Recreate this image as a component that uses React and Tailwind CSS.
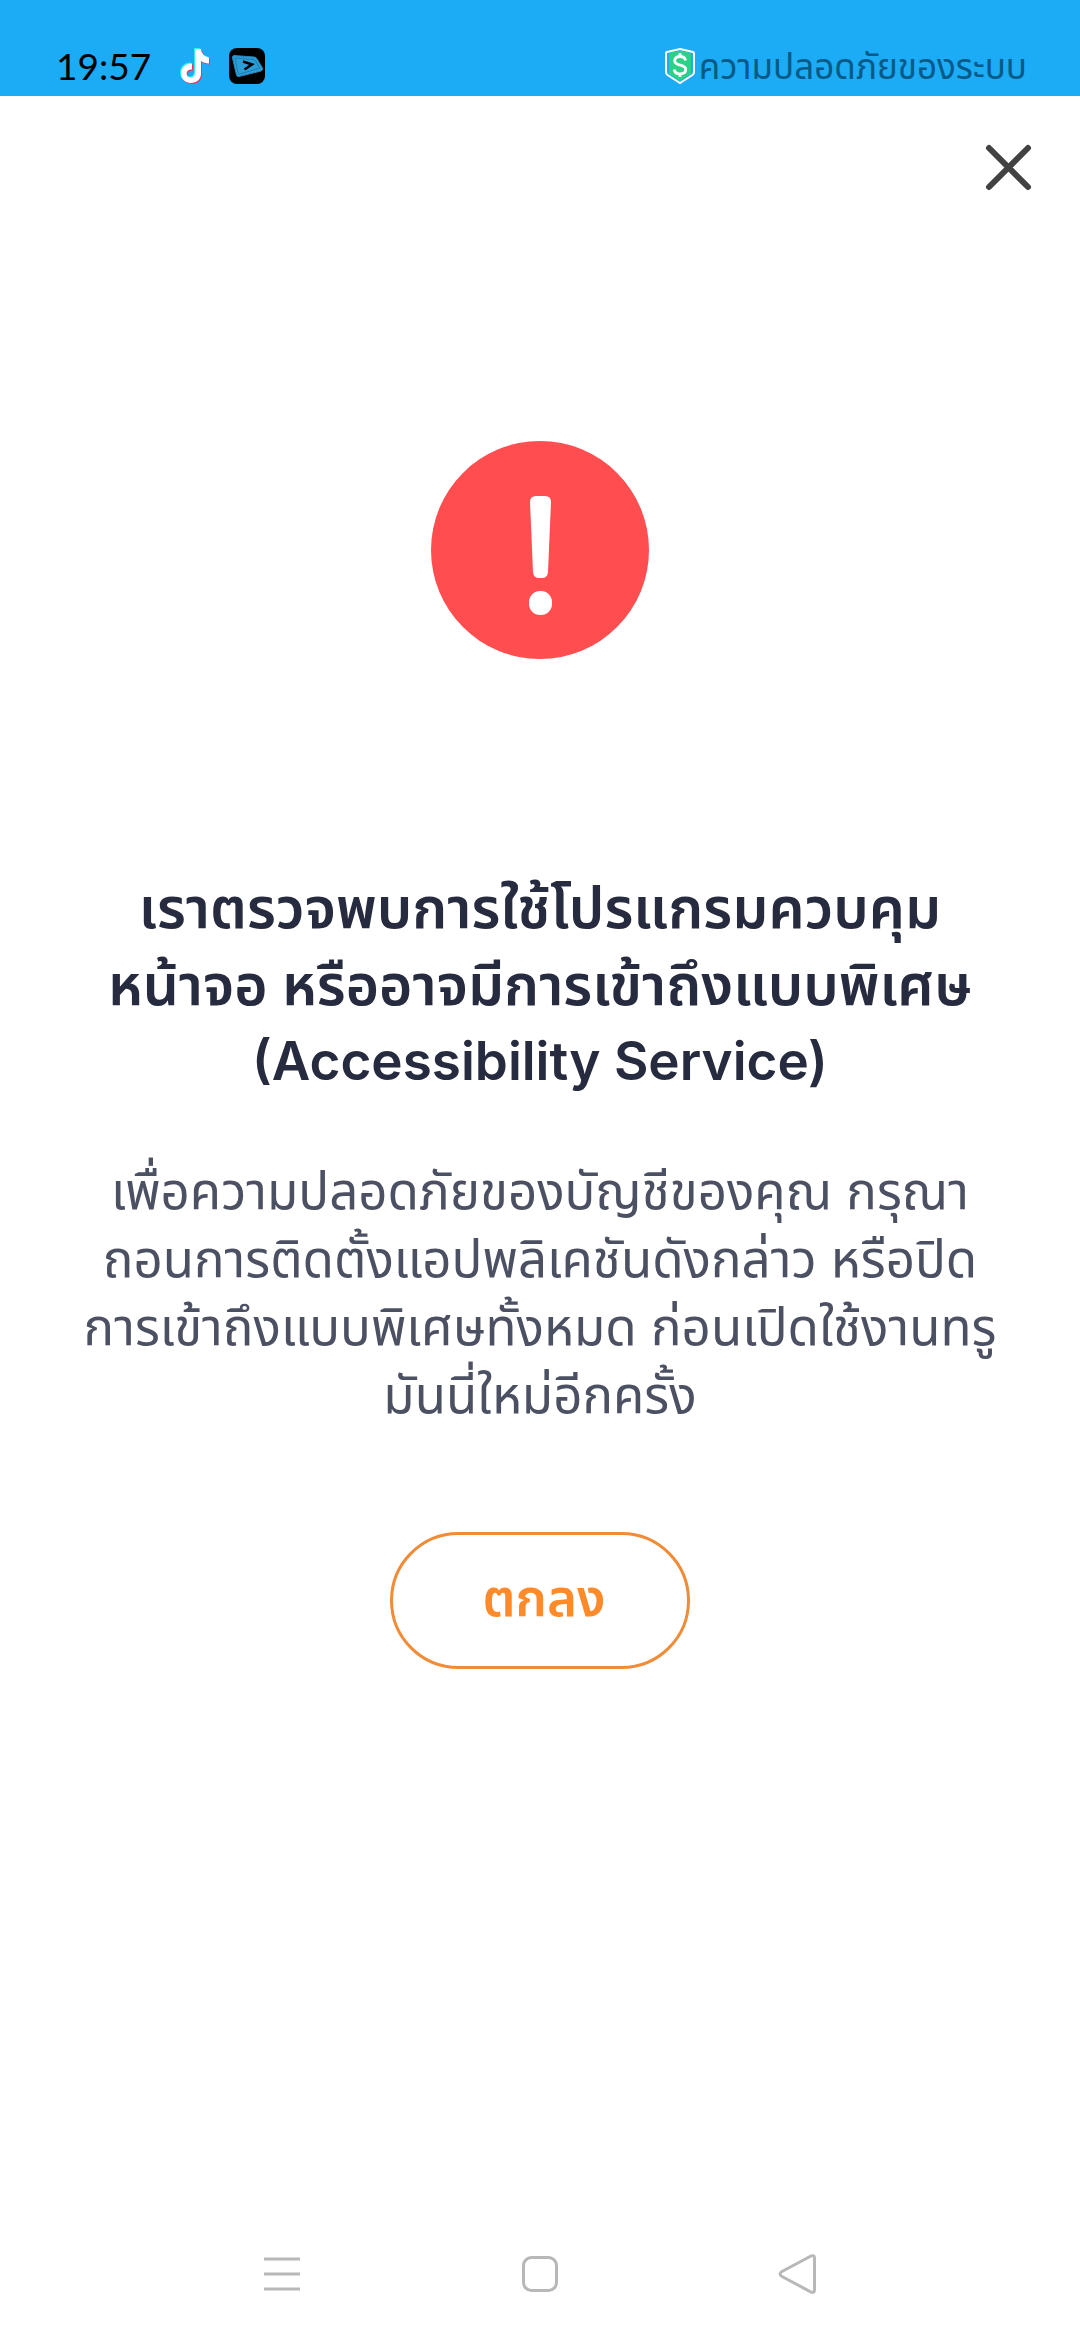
import React from "react";

const titleLines = [
  "เราตรวจพบการใช้โปรแกรมควบคุม",
  "หน้าจอ หรืออาจมีการเข้าถึงแบบพิเศษ",
];

const messageLines = [
  "เพื่อความปลอดภัยของบัญชีของคุณ กรุณา",
  "ถอนการติดตั้งแอปพลิเคชันดังกล่าว หรือปิด",
  "การเข้าถึงแบบพิเศษทั้งหมด ก่อนเปิดใช้งานทรู",
  "มันนี่ใหม่อีกครั้ง",
];

const NOTE_PATH =
  "M15 0h6c.4 4.600 3.600 8 8 8.500v6c-3 0-5.800-1-8-2.500v12.500C21 30.500 16.500 34 11 34S1 30 1 24.500 5.500 14 12 14.500v6c-3-.6-5.400 1.300-5.400 4 0 2.300 1.900 4.100 4.200 4.100 2.600 0 4.200-1.900 4.200-4.600z";

const TikTokIcon = () => (
  <svg className="w-[32px] h-[36px]" viewBox="0 0 32 36" aria-hidden="true">
    <path d={NOTE_PATH} fill="#25f4ee" />
    <path d={NOTE_PATH} fill="#f2335d" transform="translate(2 2)" />
    <path d={NOTE_PATH} fill="#ffffff" transform="translate(1 1)" />
  </svg>
);

const PlayAppIcon = () => (
  <svg className="size-9" viewBox="0 0 36 36" aria-hidden="true">
    <rect width="36" height="36" rx="8" fill="#000000" />
    <path
      d="M5 7.500 25 9q2 0 3 2l5.500 9q.8 2-1.500 3L10 28.500q-2 .3-2.500-1.500L3.500 10q-.4-2.300 1.500-2.500z"
      fill="#2b9ed8"
      stroke="#2586b8"
    />
    <path
      d="M6 10l18 1.500q1.500 0 2.500 1.500l4.500 7L11 26q-1.500.3-2-1z"
      fill="none"
      stroke="#1f7cb0"
      strokeWidth="1"
    />
    <path d="M14 13.500l9 3-7.500 5" fill="none" stroke="#000000" strokeWidth="2.500" />
  </svg>
);

const ShieldIcon = () => (
  <svg className="w-[30px] h-[36px]" viewBox="0 0 30 36" aria-hidden="true">
    <path
      d="M15 1 28 4q1 .3 1 1.500V24q0 2-1.500 3L15 35 2.500 27Q1 26 1 24V5.500Q1 4.300 2 4z"
      fill="#1cabf5"
      stroke="#ffffff"
      strokeWidth="2"
    />
    <path d="M15 2.500 26 5v21L15 33 4 26V5z" fill="#2bd187" />
    <path
      d="M20.500 12.500C20 9.800 18 8.500 15 8.500c-3.200 0-5.300 1.700-5.300 4.200 0 6 11 3 11 8.800 0 2.700-2.300 4.300-5.700 4.300-3.300 0-5.400-1.500-5.800-4.300M15 5v4M15 25.500V29"
      fill="none"
      stroke="#ffffff"
      strokeWidth="2.800"
    />
  </svg>
);

const StatusBar = () => (
  <header className="flex h-24 items-end justify-between bg-[#1cabf5] pl-14 pr-[53px] pb-3">
    <div className="flex items-center">
      <span className="font-['Lato',sans-serif] text-[37px] leading-9 text-black">
        19:57
      </span>
      <div className="ml-7 flex items-center gap-[18px]">
        <TikTokIcon />
        <PlayAppIcon />
      </div>
    </div>
    <div className="flex items-center gap-1">
      <ShieldIcon />
      <span className="whitespace-nowrap font-['Noto_Sans','Noto_Sans_Thai',sans-serif] text-[35px] leading-9 text-[#075a87]">
        ความปลอดภัยของระบบ
      </span>
    </div>
  </header>
);

const NavigationBar = () => (
  <nav className="flex h-[132px] items-center justify-center gap-[202px] text-[#b8b8b8]">
    <button type="button" aria-label="Recent apps" className="p-2">
      <svg className="size-10" viewBox="0 0 40 40" fill="none" stroke="currentColor" strokeWidth="3">
        <path d="M2 5h36M2 20h36M2 35h36" />
      </svg>
    </button>
    <button type="button" aria-label="Home" className="p-2">
      <svg className="size-10" viewBox="0 0 40 40" fill="none" stroke="currentColor" strokeWidth="3">
        <rect x="3.500" y="3.500" width="33" height="33" rx="8" />
      </svg>
    </button>
    <button type="button" aria-label="Back" className="p-2">
      <svg className="size-10" viewBox="0 0 40 40" fill="none" stroke="currentColor" strokeWidth="3">
        <path d="M33 2 4 17.500Q0 20 4 22.500L33 38q3.500 1.200 3.500-2V4q0-3.200-3.500-2z" />
      </svg>
    </button>
  </nav>
);

const App = () => {
  return (
    <div className="flex min-h-screen flex-col bg-white font-['Inter','Noto_Sans_Thai',sans-serif]">
      <StatusBar />

      {/* Close */}
      <div className="flex justify-end px-10 pt-10">
        <button type="button" aria-label="Close" className="p-1">
          <svg className="size-14" viewBox="0 0 56 56" fill="none" stroke="#424242" strokeWidth="6" strokeLinecap="round">
            <path d="M9 8 48 47M48 8 9 47" />
          </svg>
        </button>
      </div>

      {/* Warning */}
      <main className="flex flex-1 flex-col items-center px-16 text-center">
        <svg className="mt-[241px] size-[218px]" viewBox="0 0 218 218" aria-hidden="true">
          <circle cx="109" cy="109" r="109" fill="#ff4d50" />
          <path
            d="M105 55h9q6 0 6 6l-3 70q-.5 6-6 6h-3q-5.500 0-6-6l-3-70q0-6 6-6z"
            fill="#ffffff"
          />
          <rect x="98" y="150" width="23" height="24" rx="11" fill="#ffffff" />
        </svg>

        <h1 className="mt-[210px] text-[57px] font-semibold leading-[77px] text-[#272b3f]">
          {titleLines.map((line) => (
            <span key={line} className="block whitespace-nowrap">
              {line}
            </span>
          ))}
          <span className="block text-[53px]">(Accessibility Service)</span>
        </h1>

        <p className="mt-[57px] text-[51px] leading-[68px] text-[#4c5063]">
          {messageLines.map((line) => (
            <span key={line} className="block whitespace-nowrap">
              {line}
            </span>
          ))}
        </p>

        <button
          type="button"
          className="mt-[103px] h-[137px] w-[300px] rounded-full border-3 border-[#f08c38] pb-1 pl-2 text-[51px] font-semibold text-[#ff8a2a]"
        >
          ตกลง
        </button>
      </main>

      <NavigationBar />
    </div>
  );
};

export default App;
